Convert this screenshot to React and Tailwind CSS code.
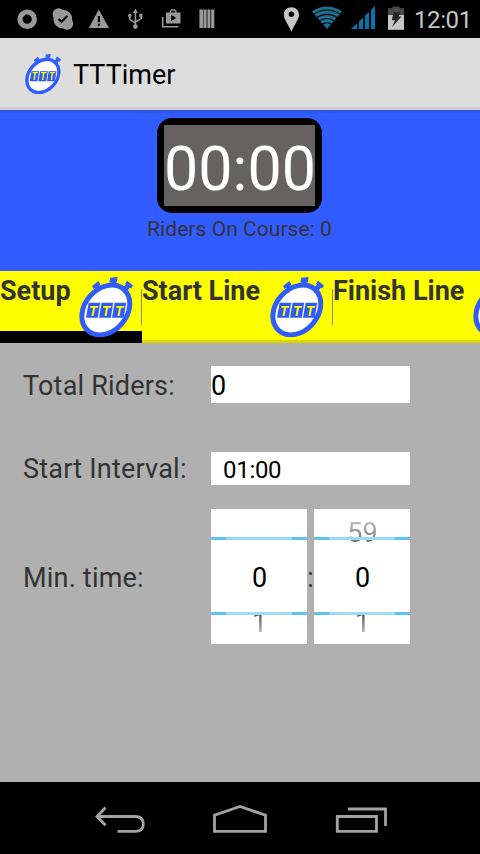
import React from 'react';

const TimerLogo = ({ className }) => (
  <svg viewBox="0 0 54 60" className={className} aria-hidden="true">
    <g fill="#2F5BFF">
      <path d="M31.2 0.8L38.6 0L37.8 5.2H36.8L36.4 9H31.4L32.4 5.4H30.4Z" />
      <path d="M13.2 9L19.4 4L21.4 7.6L20.4 8.4L22.8 12L17 15.5L15.6 11L14.4 11.8Z" />
      <path d="M48 3.8L54 8.4L52 11.6L50.8 10.8L47.5 15L43 11.5L47 7.6L46 6.8Z" />
    </g>
    <ellipse cx="26.8" cy="33" rx="27.4" ry="21" transform="rotate(-49 26.8 33)" fill="#FFFFFF" stroke="#2F5BFF" strokeWidth="5" />
    {[7, 20, 33].map((x) => (
      <g key={x} transform={`translate(${x} 25.8)`}>
        <path d="M2.6 0H14.2L11.8 15H0Z" fill="#2F5BFF" />
        <text
          transform="translate(7 12.8) scale(0.88 1)"
          textAnchor="middle"
          fontFamily="Liberation Sans"
          fontWeight="700"
          fontStyle="italic"
          fontSize="15"
          fill="#FFFF00"
          stroke="#24409A"
          strokeWidth="0.7"
          paintOrder="stroke"
        >
          T
        </text>
      </g>
    ))}
  </svg>
);

const StatusBar = () => (
  <div className="h-[38px] bg-black flex items-center">
    <svg width="230" height="38" viewBox="0 0 230 38" fill="#999999" aria-hidden="true">
      <circle cx="27.2" cy="19.2" r="7.2" fill="none" stroke="#999999" strokeWidth="5.2" />
      {/* skype check */}
      <circle cx="62.8" cy="19.2" r="9.4" />
      <circle cx="58.6" cy="14.2" r="6" />
      <circle cx="67.2" cy="23.8" r="6" />
      <path d="M58.6 19L61.6 21.8L67.4 15.8" fill="none" stroke="#000000" strokeWidth="2" />
      {/* warning */}
      <path d="M98.8 9.5L109 28H88.8Z" />
      <path d="M97.8 16H100V22.2H97.8ZM97.8 23.8H100V25.8H97.8Z" fill="#000000" />
      {/* usb */}
      <path d="M135.4 11V26M129.8 16V19.3L135.4 23.2M141.2 15V18.6L135.4 22" fill="none" stroke="#999999" strokeWidth="1.5" />
      <path d="M135.4 8.8L138 13H132.8ZM139.3 13.8H142.4V17.2H139.3Z" />
      <circle cx="129.8" cy="15.6" r="1.8" />
      <circle cx="135.4" cy="26.6" r="2.4" />
      {/* store */}
      <path d="M162.7 17V26.8H178.4" fill="none" stroke="#999999" strokeWidth="1.6" />
      <path fillRule="evenodd" d="M166 12.5H170V10.8L171.5 9.2H175L176.5 10.8V12.5H180.5V23.5H166ZM171.3 12.5H175.2V10.8H171.3ZM171 14.6V21.2L176.2 17.9Z" />
      <path d="M199.4 9.6H203V28H199.4ZM203.5 9.6H206.6V28H203.5ZM207.4 9.6H210.4V28H207.4ZM211.2 9.6H214.3V28H211.2Z" />
    </svg>
    <div className="ml-auto flex items-center h-full">
      <svg width="128" height="38" viewBox="280 0 128 38" aria-hidden="true">
        <path fillRule="evenodd" fill="#C6C6C6" d="M291.4 7.2C286.9 7.2 283.8 10.5 283.8 14.7C283.8 19.5 289.5 26.5 291.4 31.6C293.3 26.5 299 19.5 299 14.7C299 10.5 295.9 7.2 291.4 7.2ZM291.4 11.5A2.7 2.7 0 1 1 291.4 16.9A2.7 2.7 0 1 1 291.4 11.5Z" />
        <path d="M327 29L312 11.5Q327 1.5 342 11.5Z" fill="#1F6F90" />
        <g fill="none" stroke="#000000" strokeWidth="1.1">
          <path d="M313 14.6Q327 5.4 341 14.6" />
          <path d="M315.5 18.4Q327 10.4 338.5 18.4" />
          <path d="M318.5 21.7Q327 15.4 335.5 21.7" />
          <path d="M321.3 25Q327 20.4 332.7 25" />
        </g>
        <path fill="#0077AE" d="M351 29L357 23.2V29ZM359 21.5L363 17.6V29H359ZM365 15.8L369 12V29H365ZM371 10L375 6V29H371Z" />
        <path fill="#4A4A4A" d="M392.4 6.5H399.6V8.2H404V15H388V8.2H392.4Z" />
        <path fill="#C6C6C6" d="M388 15H404V29.8H388Z" />
        <path fill="#262626" d="M393.5 12.5L400 12L398.8 16.4H401.5L392 27.2L395 20.3H391.8Z" />
      </svg>
      <span className="w-[72px] pl-[6px] pt-px text-[24px] leading-[38px] tracking-[-0.4px] text-[#C6C6C6] whitespace-nowrap">12:01</span>
    </div>
  </div>
);

const ActionBar = () => (
  <header className="h-[72px] bg-[#DDDDDD] border-b-[3px] border-[#CACCD0] flex items-center pl-[25px]">
    <TimerLogo className="w-[36px] h-[40px] mt-[3px]" />
    <h1 className="ml-3 mt-[5px] text-[27px] leading-8 text-black">TTTimer</h1>
  </header>
);

const Clock = () => (
  <section className="h-[161px] bg-[#325CFF] bg-linear-to-b from-[#2A4FD4] to-[#325CFF] to-[4px] flex flex-col items-center pt-2 pr-px">
    <div className="w-[165px] h-[95px] border-[7px] border-black rounded-[15px] bg-black">
      <div className="h-full bg-[#666262] flex items-center justify-center text-[61px] leading-none text-white pt-[7px] pl-px whitespace-nowrap">
        00:00
      </div>
    </div>
    <p className="mt-[3px] text-[21px] leading-[26px] tracking-[0.05px] text-[#333333]">Riders On Course: 0</p>
  </section>
);

const tabs = [
  { label: 'Setup', active: true, width: 'w-[142px]' },
  { label: 'Start Line', active: false, width: 'w-[191px]' },
  { label: 'Finish Line', active: false, width: 'w-[203px]' }
];

const TabBar = () => (
  <nav className="h-[72px] flex overflow-hidden bg-[#FFFF00]">
    {tabs.map(({ label, active, width }, i) => (
      <div
        key={label}
        className={`${width} shrink-0 relative flex justify-between items-start pr-[9px] ${
          active ? 'border-b-[12px] border-black' : 'border-b-[3px] border-[#D9D900]'
        }`}
      >
        <span className="mt-[3px] text-[27px] leading-[34px] font-bold text-[#333333] whitespace-nowrap">{label}</span>
        <TimerLogo className="relative w-[54px] h-[60px] mt-[6px] shrink-0" />
        {i < 2 && <span className="absolute right-0 top-[18px] w-px h-9 bg-[#8A8A62]" />}
      </div>
    ))}
  </nav>
);

const NumberPicker = ({ previous }) => (
  <div className="w-24 h-[135px] bg-white flex flex-col items-center text-[27px] overflow-hidden">
    <div className="h-7 w-full flex justify-center">
      <span className="pt-[8px] pl-px leading-8 h-[42px] bg-linear-to-b from-[#C4C4C4] from-25% to-[#555555] bg-clip-text text-transparent">{previous}</span>
    </div>
    <div className="relative h-[78px] w-full border-y-[3px] border-[#5DC4EE] flex items-center justify-center text-black">
      <span className="absolute left-[15px] -top-[3px] w-[66px] h-[3px] bg-[#9CDCF5]/90" />
      <span className="absolute left-[15px] -bottom-[3px] w-[66px] h-[3px] bg-[#9CDCF5]" />
      <span className="pt-[4px] pl-px">0</span>
    </div>
    <div className="h-[29px] overflow-hidden">
      <span className="block -mt-[8px] pl-px leading-8 bg-linear-to-b from-[#555555] from-20% to-[#C4C4C4] to-90% bg-clip-text text-transparent">1</span>
    </div>
  </div>
);

const SetupForm = () => (
  <main className="h-[439px] bg-[#B0B0B0] pt-[23px] pl-[23px] text-[27px] text-[#333333]">
    <div className="flex items-center h-[37px]">
      <label className="w-[188px] pt-[3px] tracking-[0.2px] whitespace-nowrap">Total Riders:</label>
      <div className="w-[199px] h-[37px] bg-white text-black leading-[40px]">0</div>
    </div>
    <div className="flex items-center h-[33px] mt-[49px]">
      <label className="w-[188px] pt-px tracking-[0.22px] whitespace-nowrap">Start Interval:</label>
      <div className="w-[199px] h-[33px] pl-3 bg-white text-black text-[24px] leading-[36px] tracking-[-0.3px]">01:00</div>
    </div>
    <div className="flex items-center h-[135px] mt-6">
      <label className="w-[188px] pt-[3px] tracking-[0.2px] whitespace-nowrap">Min. time:</label>
      <NumberPicker />
      <span className="w-[7px] pt-[3px] flex justify-center">:</span>
      <NumberPicker previous="59" />
    </div>
  </main>
);

const NavigationBar = () => (
  <footer className="h-[72px] bg-black">
    <svg width="480" height="72" viewBox="0 782 480 72" fill="none" stroke="#A3A3A3" strokeWidth="2.8" aria-hidden="true">
      <path d="M97 816.5H135Q143.3 816.5 143.3 824T135 831.3H117.5M105.5 807.5L97 816.5L105.5 825.3" />
      <path d="M214.5 831.3V815.2L240 806.5L265.5 815.2V831.3Z" />
      <path d="M337.3 816.5H376.5V831.3H337.3ZM348 809H385.5V826" />
    </svg>
  </footer>
);

export default function App() {
  return (
    <div className="w-[480px] h-[854px] overflow-hidden font-['Roboto',sans-serif]">
      <StatusBar />
      <ActionBar />
      <Clock />
      <TabBar />
      <SetupForm />
      <NavigationBar />
    </div>
  );
}
